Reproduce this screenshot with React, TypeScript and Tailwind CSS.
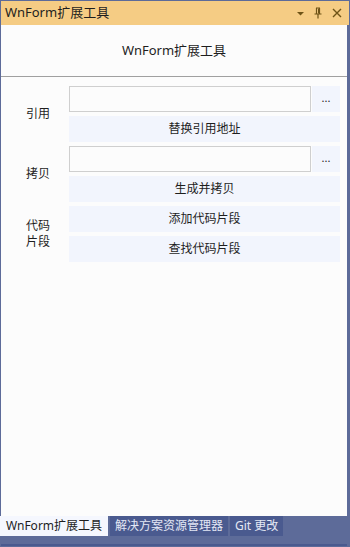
import React from "react";

const font = { fontFamily: '"Noto Sans", "Noto Sans CJK SC", sans-serif' };

function Btn({ children }: { children: React.ReactNode }) {
  return (
    <div className="h-[26px] bg-[#f2f5fd] flex items-center justify-center text-[12px] text-[#1e1e1e]">
      {children}
    </div>
  );
}

function Field() {
  return (
    <div className="flex h-[26px] gap-[1px]">
      <div className="flex-1 border border-[#cfcfcf] bg-[#fcfcfc]" />
      <div className="w-[28px] bg-[#f2f5fd] flex items-center justify-center text-[11px] leading-none text-[#1e1e1e] pb-[3px]">
        ...
      </div>
    </div>
  );
}

export default function App() {
  return (
    <div className="w-[350px] h-[547px] bg-[#5d6b99] flex flex-col pt-[1px] pl-[1px]" style={font}>
      {/* title bar */}
      <div className="h-[24px] mr-[1px] bg-[#f5cc84] flex items-center pl-[4px] pr-[6px]">
        <span className="text-[13px] text-[#1e1e1e]">WnForm扩展工具</span>
        <div className="ml-auto flex items-center gap-[8px] text-[#7a5a16]">
          <svg width="9" height="9" viewBox="0 0 9 9">
            <path d="M1 3 H8 L4.5 6.5 Z" fill="#6e5316" />
          </svg>
          <svg width="10" height="12" viewBox="0 0 10 12">
            <path d="M3 1 H7 M3.5 1 V7 M6.5 1 V7 M1.5 7 H8.5 M5 7 V11.5" stroke="#6e5316" strokeWidth="1.2" fill="none" />
            <path d="M5.5 1.5 V6.5" stroke="#6e5316" strokeWidth="1" />
          </svg>
          <svg width="12" height="12" viewBox="0 0 12 12">
            <path d="M2 2 L10 10 M10 2 L2 10" stroke="#6e5316" strokeWidth="1.4" />
          </svg>
        </div>
      </div>
      {/* content */}
      <div className="w-[346px] h-[491px] bg-[#fcfcfc] flex flex-col">
        <div className="h-[52px] flex items-center justify-center text-[13px] text-[#1e1e1e] border-b border-[#a0a0a0]">
          WnForm扩展工具
        </div>
        <div className="pt-[9px] pr-[7px] flex flex-col gap-[4px]">
          <div className="flex">
            <div className="w-[68px] flex items-center pl-[25px] text-[12px] text-[#1e1e1e]">引用</div>
            <div className="flex-1 flex flex-col gap-[4px]">
              <Field />
              <Btn>替换引用地址</Btn>
            </div>
          </div>
          <div className="flex">
            <div className="w-[68px] flex items-center pl-[25px] text-[12px] text-[#1e1e1e]">拷贝</div>
            <div className="flex-1 flex flex-col gap-[4px]">
              <Field />
              <Btn>生成并拷贝</Btn>
            </div>
          </div>
          <div className="flex">
            <div className="w-[68px] flex items-center pl-[25px] text-[12px] leading-[16px] text-[#1e1e1e]">
              代码
              <br />
              片段
            </div>
            <div className="flex-1 flex flex-col gap-[4px]">
              <Btn>添加代码片段</Btn>
              <Btn>查找代码片段</Btn>
            </div>
          </div>
        </div>
      </div>
      {/* tabs */}
      <div className="h-[20px] flex gap-[2px] -ml-[1px] text-[12px]">
        <div className="w-[108px] bg-[#f5f7fe] text-[#1e1e1e] flex items-center justify-center">WnForm扩展工具</div>
        <div className="px-[5px] bg-[#4a5a8f] text-[#e4e8f5] flex items-center">解决方案资源管理器</div>
        <div className="px-[5px] bg-[#4a5a8f] text-[#e4e8f5] flex items-center">Git 更改</div>
      </div>
      <div className="mt-[8px] h-[2px] w-[346px] bg-[#4a5a8f]" />
    </div>
  );
}
